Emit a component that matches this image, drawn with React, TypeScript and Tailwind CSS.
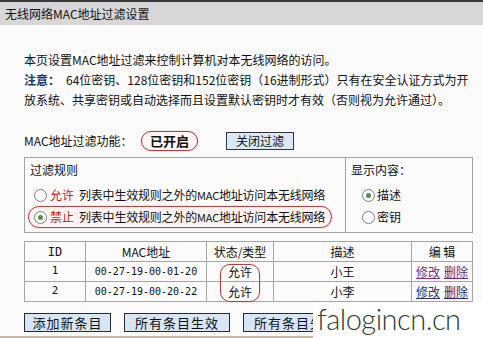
import React from "react";

const cn = { fontFamily: '"Noto Sans CJK SC", "DejaVu Sans", sans-serif' };
const mono = { fontFamily: '"DejaVu Sans Mono", "Noto Sans CJK SC", monospace' };

function Radio({ checked }: { checked?: boolean }) {
  return (
    <span className="inline-flex w-[13px] h-[13px] rounded-full border border-[#6f7f8f] bg-white items-center justify-center shrink-0">
      {checked && <span className="w-[5px] h-[5px] rounded-full bg-[#4f8f4f]" />}
    </span>
  );
}

function Btn({ label, w }: { label: string; w: string }) {
  return (
    <div
      className={`${w} h-[19px] border border-[#2a2a2a] bg-[#d6e6f6] flex items-center justify-center text-[13px] tracking-[1px] text-[#111] leading-none`}
    >
      {label}
    </div>
  );
}

const rows = [
  { id: "1", mac: "00-27-19-00-01-20", desc: "小王", edit: "text-[#7a2f7a]", del: "text-[#6a2a80]" },
  { id: "2", mac: "00-27-19-00-20-22", desc: "小李", edit: "text-[#2f3370]", del: "text-[#262a6e]" },
];

function RuleText() {
  return (
    <span className="ml-[2px] whitespace-nowrap tracking-[-0.2px]">
      列表中生效规则之外的<span className="text-[11px]">MAC</span>地址访问本无线网络
    </span>
  );
}

export default function App() {
  return (
    <div className="w-[483px] h-[338px] overflow-hidden relative bg-[#fbfbfb] text-[12px] text-[#111]" style={cn}>
      {/* title bar */}
      <div className="h-[25px] bg-[#d7d7d7] border-t-2 border-[#3a3a3a] flex items-center px-[5px] text-[12px] text-[#111]">
        无线网络MAC地址过滤设置
      </div>

      <div className="pl-[24px] pr-[10px] pt-[25px] border-b-2 border-[#c9b9a4] h-[313px]">
        {/* intro */}
        <div className="leading-[20px]">
          <div>本页设置MAC地址过滤来控制计算机对本无线网络的访问。</div>
          <div className="whitespace-nowrap">
            <span className="font-bold text-[#1a3a6a]">注意：</span>
            <span className="ml-[6px]">64位密钥、128位密钥和152位密钥（16进制形式）只有在安全认证方式为开</span>
          </div>
          <div>放系统、共享密钥或自动选择而且设置默认密钥时才有效（否则视为允许通过）。</div>
        </div>

        {/* switch line */}
        <div className="mt-[21px] h-[20px] flex items-center">
          <span className="w-[117px]">MAC地址过滤功能：</span>
          <span className="w-[57px] h-[20px] rounded-full border border-[#a9403f] bg-[#fff6f6] shadow-[0_0_2px_#f0b0b0] flex items-center justify-center font-bold text-[13px]">
            已开启
          </span>
          <span className="ml-[28px] w-[68px] h-[18px] border border-[#333] bg-[#d9e9f7] flex items-center justify-center text-[12px]">
            关闭过滤
          </span>
        </div>

        {/* rule boxes */}
        <div className="mt-[6px] w-[449px] h-[76px] border border-[#a3a3a3] flex">
          <div className="w-[321px] shrink-0 border-r border-[#a3a3a3] pl-[3px] pt-[2px]">
            <div className="h-[20px] leading-[20px] pl-[2px]">过滤规则</div>
            <div className="h-[22px] mt-[4px] flex items-center pl-[6px] gap-[3px]">
              <Radio />
              <span className="text-[#c01818]">允许</span>
              <RuleText />
            </div>
            <div className="h-[22px] w-[304px] flex items-center pl-[5px] gap-[3px] rounded-full border border-[#b04848] bg-[#fff4f4] shadow-[0_0_2px_#f0b0b0]">
              <Radio checked />
              <span className="text-[#c01818]">禁止</span>
              <RuleText />
            </div>
          </div>
          <div className="flex-1 px-[5px] pt-[2px]">
            <div className="h-[20px] leading-[20px]">显示内容：</div>
            <div className="h-[22px] mt-[4px] flex items-center pl-[11px] gap-[2px]">
              <Radio checked />
              <span>描述</span>
            </div>
            <div className="h-[22px] flex items-center pl-[11px] gap-[2px]">
              <Radio />
              <span>密钥</span>
            </div>
          </div>
        </div>

        {/* table */}
        <div className="relative mt-[8px] w-[449px]">
          <table className="w-full border-collapse border border-[#a5a5a5] text-center">
            <tbody>
              <tr className="h-[20px]">
                <td className="w-[61px] border border-[#a5a5a5]" style={mono}>ID</td>
                <td className="w-[121px] border border-[#a5a5a5]">MAC地址</td>
                <td className="w-[67px] border border-[#a5a5a5]">状态/类型</td>
                <td className="w-[138px] border border-[#a5a5a5]">描述</td>
                <td className="border border-[#a5a5a5]">编 辑</td>
              </tr>
              {rows.map((r) => (
                <tr key={r.id} className="h-[20px]">
                  <td className="border border-[#a5a5a5] text-[11px]" style={mono}>{r.id}</td>
                  <td className="border border-[#a5a5a5] text-[10px]" style={mono}>{r.mac}</td>
                  <td className="border border-[#a5a5a5]">允许</td>
                  <td className="border border-[#a5a5a5]">{r.desc}</td>
                  <td className="border border-[#a5a5a5]">
                    <span className={`underline ${r.edit}`}>修改</span>
                    <span className={`underline ml-[4px] ${r.del}`}>删除</span>
                  </td>
                </tr>
              ))}
            </tbody>
          </table>
          <div className="absolute left-[196px] top-[23px] w-[40px] h-[38px] rounded-[10px] border border-[#a9403f] shadow-[0_0_2px_#f0b0b0] pointer-events-none" />
        </div>

        {/* buttons */}
        <div className="mt-[11px] flex gap-[13px]">
          <Btn label="添加新条目" w="w-[87px]" />
          <Btn label="所有条目生效" w="w-[106px]" />
          <Btn label="所有条目失效" w="w-[106px]" />
        </div>
      </div>

      {/* watermark */}
      <div className="absolute left-[313px] top-[302px] w-[170px] h-[36px] bg-white flex items-center pl-[4px]">
        <span
          className="text-[29px] leading-none text-[#2c4034] font-light tracking-[-0.5px] -mt-[4px]"
          style={{ fontFamily: '"Lato", "Open Sans", sans-serif' }}
        >
          falogincn.cn
        </span>
      </div>
    </div>
  );
}
